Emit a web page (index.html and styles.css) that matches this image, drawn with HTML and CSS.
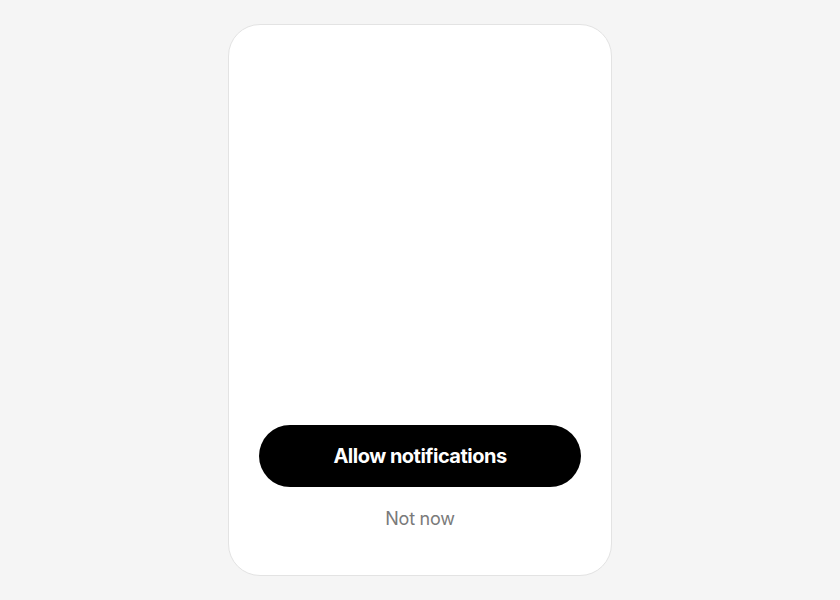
FILE: index.html
```html
<!DOCTYPE html>
<html lang="en">
  <head>
    <meta charset="UTF-8" />
    <meta name="viewport" content="width=device-width, initial-scale=1.0" />
    <title>Notifications</title>

    <link rel="stylesheet" href="styles.css">
  </head>

  <body>
    <div class="prompt-card">
      <div class="prompt-body"></div>

      <div class="prompt-actions">
        <button type="button" class="allow-button">Allow notifications</button>
        <button type="button" class="later-button">Not now</button>
      </div>
    </div>
  </body>
</html>
```

FILE: styles.css
```css
* {
  margin: 0;
  padding: 0;
  box-sizing: border-box;
  font-family: Inter, "Noto Sans", sans-serif;
}

body {
  display: flex;
  justify-content: center;
  height: 100vh;
  width: 100vw;
  padding-top: 24px;
  background-color: #f5f5f5;
}

.prompt-card {
  display: flex;
  flex-direction: column;
  width: 384px;
  height: 552px;
  padding: 0 30px 38px;
  background-color: #fff;
  border: 1px solid #e3e3e3;
  border-radius: 32px;
}

.prompt-body {
  flex: 1;
}

.prompt-actions {
  display: flex;
  flex-direction: column;
  gap: 12px;
}

.allow-button {
  height: 62px;
  border: none;
  border-radius: 31px;
  background-color: #000;
  color: #fff;
  font-size: 20px;
  font-weight: 700;
  letter-spacing: -0.5px;
}

.later-button {
  height: 38px;
  border: none;
  background: none;
  color: #7a7a7a;
  font-size: 18px;
  letter-spacing: -0.25px;
}
```
